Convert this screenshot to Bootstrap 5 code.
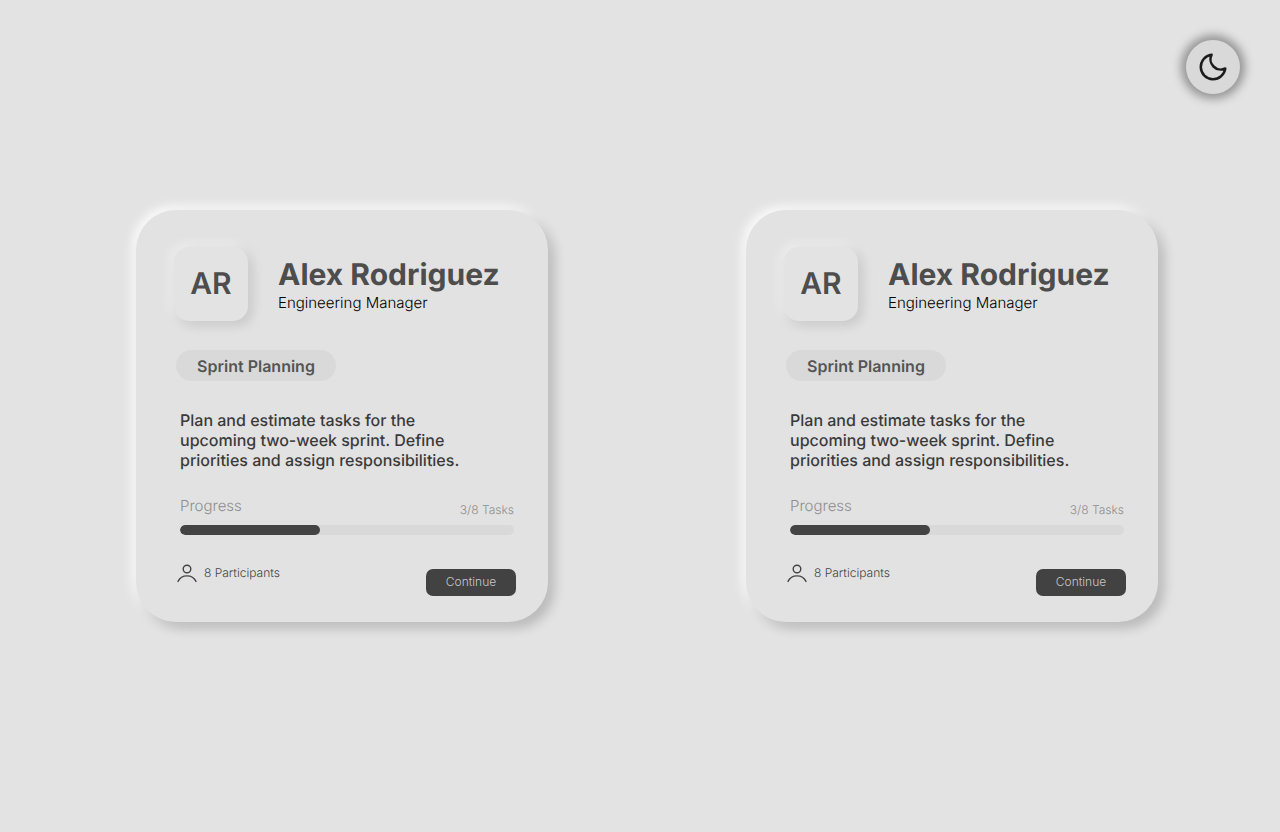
<!DOCTYPE html>
<html lang="en">
<head>
<meta charset="utf-8">
<meta name="viewport" content="width=device-width, initial-scale=1">
<title>Sprint Planning</title>
<link href="https://cdn.jsdelivr.net/npm/bootstrap@5.3.0/dist/css/bootstrap.min.css" rel="stylesheet">
<style>
  body { background: #e3e3e3; font-family: Inter, "Liberation Sans", sans-serif; font-optical-sizing: none; text-rendering: geometricPrecision; }
  .board { column-gap: 198px; row-gap: 64px; padding: 40px 0 40px 14px; }
  .theme-toggle { top: 40px; right: 40px; width: 54px; height: 54px; background: #d9d9d9; color: #1c1c1c; box-shadow: 0 0 10px 5px rgba(0, 0, 0, .35); }
  .member-card { width: 412px; padding: 37px 32px 26px 38px; border-radius: 40px; background: #e2e2e2; box-shadow: 6px 6px 12px rgba(0, 0, 0, .2), -3px -3px 12px #fff; }
  .avatar { width: 74px; height: 74px; border-radius: 15px; background: #e3e3e3; color: #4d4d4d; font-size: 30px; font-weight: 600; box-shadow: 4px 4px 12px rgba(0, 0, 0, .13), -3px -3px 12px rgba(255, 255, 255, .5); }
  .person { padding: 10px 0 0 30px; }
  .member-name { font-size: 30px; line-height: 36px; font-weight: 700; color: #4d4d4d; }
  .member-role { font-size: 15px; line-height: 20px; font-weight: 300; color: #000; }
  .topic { width: 160px; height: 31px; margin: 29px 0 0 2px; border-radius: 16px; background: #d9d9d9; color: #555; font-size: 16px; font-weight: 600; }
  .details { padding: 0 2px 0 6px; }
  .summary { width: 300px; margin: 29px 0 26px; font-size: 16px; line-height: 20px; font-weight: 500; color: #3a3a3a; }
  .progress-name { padding-bottom: 2px; font-size: 15px; line-height: 20px; font-weight: 300; color: #8e8e8e; }
  .fine-text { font-size: 12px; line-height: 16px; font-weight: 300; }
  .task-count { color: #8e8e8e; }
  .track { height: 10px; margin-top: 7px; border-radius: 5px; background: #d9d9d9; }
  .track .progress-bar { border-radius: 5px; background: #444; }
  .card-foot { margin: 28px 0 0 2px; }
  .people { color: #444; gap: 6px; }
  .people span { padding-bottom: 2px; }
  .btn-continue, .btn-continue:hover { width: 90px; height: 27px; margin-top: 6px; padding: 0 0 2px; border-radius: 7px; background: #424242; color: #c8c8c8; }
</style>
</head>
<body>
<button type="button" class="theme-toggle btn rounded-circle border-0 p-0 position-fixed d-flex align-items-center justify-content-center" aria-label="Dark mode">
  <svg width="32" height="32" viewBox="0 0 32 32" fill="none" stroke="currentColor" stroke-width="2.5" stroke-linecap="round" stroke-linejoin="round" aria-hidden="true"><path d="M14.6 3.7A12.3 12.3 0 1 0 28.3 17.4A10.2 10.2 0 0 1 14.6 3.7Z"/></svg>
</button>
<main class="board min-vh-100 d-flex flex-wrap align-items-center align-content-center justify-content-center">
  <article class="member-card">
    <header class="d-flex">
      <div class="avatar d-flex flex-shrink-0 align-items-center justify-content-center">AR</div>
      <div class="person">
        <h2 class="member-name m-0 text-nowrap">Alex Rodriguez</h2>
        <p class="member-role m-0">Engineering Manager</p>
      </div>
    </header>
    <div class="topic d-flex align-items-center justify-content-center">Sprint Planning</div>
    <div class="details">
      <p class="summary">Plan and estimate tasks for the upcoming two-week sprint. Define priorities and assign responsibilities.</p>
      <div class="d-flex justify-content-between align-items-end">
        <span class="progress-name">Progress</span>
        <span class="task-count fine-text">3/8 Tasks</span>
      </div>
      <div class="progress track" role="progressbar" aria-label="Progress" aria-valuenow="42" aria-valuemin="0" aria-valuemax="100"><div class="progress-bar" style="width: 42%"></div></div>
    </div>
    <footer class="card-foot d-flex justify-content-between align-items-start">
      <div class="people fine-text d-flex align-items-center">
        <svg width="22" height="22" viewBox="0 0 22 22" fill="none" stroke="currentColor" stroke-width="1.4" stroke-linecap="round" aria-hidden="true"><circle cx="11" cy="6" r="3.8"/><path d="M2 18.4C5.6 11 16.4 11 20 18.4"/></svg>
        <span>8 Participants</span>
      </div>
      <button type="button" class="btn btn-continue fine-text border-0">Continue</button>
    </footer>
  </article>
  <article class="member-card">
    <header class="d-flex">
      <div class="avatar d-flex flex-shrink-0 align-items-center justify-content-center">AR</div>
      <div class="person">
        <h2 class="member-name m-0 text-nowrap">Alex Rodriguez</h2>
        <p class="member-role m-0">Engineering Manager</p>
      </div>
    </header>
    <div class="topic d-flex align-items-center justify-content-center">Sprint Planning</div>
    <div class="details">
      <p class="summary">Plan and estimate tasks for the upcoming two-week sprint. Define priorities and assign responsibilities.</p>
      <div class="d-flex justify-content-between align-items-end">
        <span class="progress-name">Progress</span>
        <span class="task-count fine-text">3/8 Tasks</span>
      </div>
      <div class="progress track" role="progressbar" aria-label="Progress" aria-valuenow="42" aria-valuemin="0" aria-valuemax="100"><div class="progress-bar" style="width: 42%"></div></div>
    </div>
    <footer class="card-foot d-flex justify-content-between align-items-start">
      <div class="people fine-text d-flex align-items-center">
        <svg width="22" height="22" viewBox="0 0 22 22" fill="none" stroke="currentColor" stroke-width="1.4" stroke-linecap="round" aria-hidden="true"><circle cx="11" cy="6" r="3.8"/><path d="M2 18.4C5.6 11 16.4 11 20 18.4"/></svg>
        <span>8 Participants</span>
      </div>
      <button type="button" class="btn btn-continue fine-text border-0">Continue</button>
    </footer>
  </article>
</main>
<script src="https://cdn.jsdelivr.net/npm/bootstrap@5.3.0/dist/js/bootstrap.bundle.min.js"></script>
</body>
</html>
